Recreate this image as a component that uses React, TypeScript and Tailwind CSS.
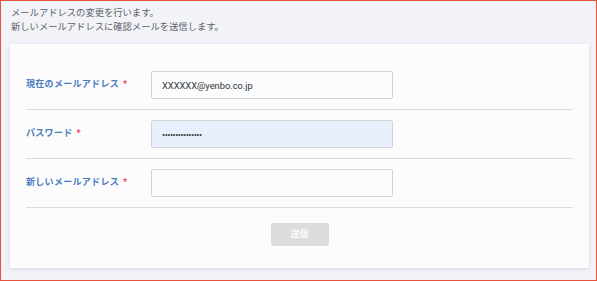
import { useState } from 'react';

const FONT = "font-['Roboto','Noto_Sans_CJK_JP',sans-serif]";

type Field = {
  label: string;
  type: string;
  value: string;
  autofill?: boolean;
};

const FIELDS: Field[] = [
  { label: '現在のメールアドレス', type: 'text', value: 'XXXXXX@yenbo.co.jp' },
  { label: 'パスワード', type: 'password', value: 'passwordpasswo1', autofill: true },
  { label: '新しいメールアドレス', type: 'text', value: '' },
];

export default function App() {
  const [values, setValues] = useState(FIELDS.map(f => f.value));

  return (
    <div className={`${FONT} w-[597px] h-[281px] bg-[#f2f3f8] border border-[#e5533f] overflow-hidden`}>
      <div className="pl-[10px] pt-[5px] text-[9.3px] leading-[14px] text-[#5a5f66]">
        <p>メールアドレスの変更を行います。</p>
        <p>新しいメールアドレスに確認メールを送信します。</p>
      </div>

      <div className="ml-[9px] mr-[7px] mt-[10px] bg-[#fcfcfc] shadow-[0_1px_4px_rgba(0,0,0,0.12)] px-[16px] pt-[17px] pb-[22px]">
        {FIELDS.map((f, i) => (
          <div key={f.label} className="flex items-center py-[10px] border-b border-[#dcdcdc]">
            <label className="w-[125px] shrink-0 text-[9px] font-bold text-[#4b7cc0] tracking-[0.3px]">
              {f.label}
              <span className="ml-[4px] text-[#e8405a]">*</span>
            </label>
            <input
              type={f.type}
              value={values[i]}
              onChange={e => setValues(v => v.map((x, j) => (j === i ? e.target.value : x)))}
              className={`w-[242px] h-[28px] px-[10px] text-[9.3px] text-[#333] border border-[#d3d3d3] rounded-[2px] outline-none ${
                f.autofill ? 'bg-[#e8f0fe] border-[#c9d3e3] text-[7px] tracking-[-0.5px]' : 'bg-[#fbfcfe]'
              }`}
            />
          </div>
        ))}

        <div className="flex justify-center pt-[15px]">
          <button
            disabled
            className="w-[58px] h-[23px] bg-[#dcdcdc] text-white text-[9px] font-bold rounded-[2px]"
          >
            送信
          </button>
        </div>
      </div>
    </div>
  );
}
